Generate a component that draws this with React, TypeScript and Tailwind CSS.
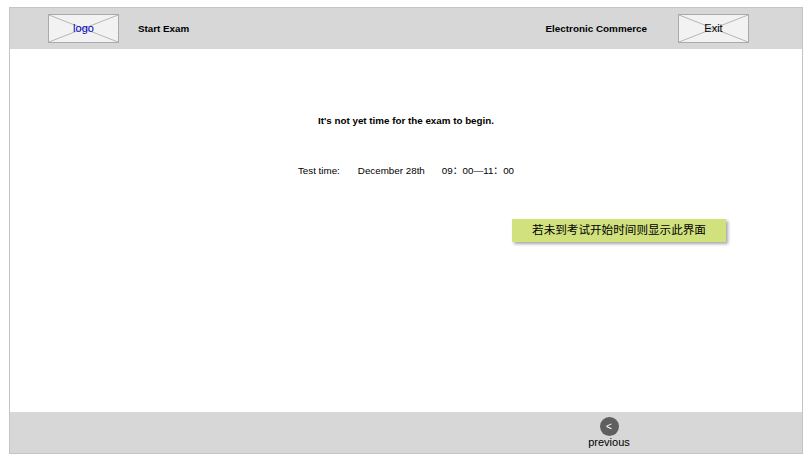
function PlaceholderBox({ label, className }: { label: string; className: string }) {
  return (
    <div className="relative flex h-[29px] w-[71px] shrink-0 items-center justify-center border border-[#aaaaaa] bg-[#f2f2f2]">
      <svg className="absolute inset-0 h-full w-full" viewBox="0 0 69 27" preserveAspectRatio="none">
        <line x1="0" y1="0" x2="69" y2="27" stroke="#b5b5b5" strokeWidth="1" />
        <line x1="69" y1="0" x2="0" y2="27" stroke="#b5b5b5" strokeWidth="1" />
      </svg>
      <span className={`relative -mt-[1px] text-[11px] ${className}`}>{label}</span>
    </div>
  );
}

export default function App() {
  return (
    <div
      lang="zh-CN"
      className="h-[461px] w-[811px] overflow-hidden bg-white pl-[9px] pt-[7px] font-['Liberation_Sans','Noto_Sans_CJK_SC',sans-serif] text-black"
    >
      <div className="relative flex h-[447px] w-[794px] flex-col border border-[#c4c4c4] bg-white">
        <header className="flex h-[41px] shrink-0 items-center bg-[#d7d7d7] pl-[38px] pr-[53px]">
          <PlaceholderBox label="logo" className="text-[#0000c0]" />
          <span className="ml-[19px] mt-[1px] text-[9.8px] font-bold">Start Exam</span>
          <span className="ml-auto mr-[31px] mt-[1px] text-[9.9px] font-bold">Electronic Commerce</span>
          <PlaceholderBox label="Exit" className="text-black" />
        </header>

        <main className="relative flex-1">
          <div className="flex flex-col items-center pt-[65px]">
            <p className="h-[13px] text-[9.8px] font-bold leading-[13px]">It's not yet time for the exam to begin.</p>
            <p className="mt-[37px] flex h-[13px] text-[9.8px] leading-[13px]">
              <span>Test time:</span>
              <span className="ml-[18px]">December 28th</span>
              <span className="ml-[17px]">09：00—11：00</span>
            </p>
          </div>
          <div className="absolute left-[502px] top-[170px] flex h-[23px] w-[214px] items-center justify-center bg-[#d0e17d] pb-[2px] font-['Noto_Sans_CJK_SC',sans-serif] text-[11.6px] shadow-[2px_2px_3px_rgba(0,0,0,0.35)]">
            若未到考试开始时间则显示此界面
          </div>
        </main>

        <footer className="flex h-[41px] shrink-0 bg-[#d7d7d7] pl-[578px] pt-[5px]">
          <button className="flex w-[42px] flex-col items-center">
            <span className="flex h-[19px] w-[19px] items-center justify-center rounded-full bg-[#5f5f5f] text-[10px] leading-none text-white">&lt;</span>
            <span className="-mt-[1px] text-[11px] leading-[14px]">previous</span>
          </button>
        </footer>
      </div>
    </div>
  );
}
